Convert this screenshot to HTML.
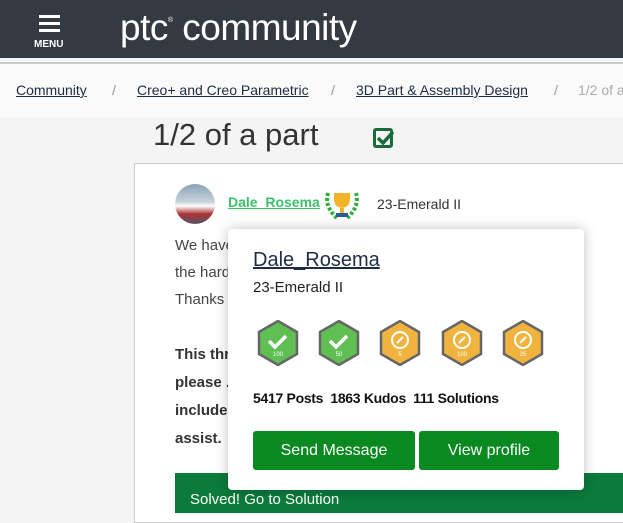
<!DOCTYPE html>
<html><head><style>
*{margin:0;padding:0;box-sizing:border-box}
body{width:623px;height:505px;overflow:hidden;background:#f4f4f4;font-family:"Liberation Sans",sans-serif;position:relative;color:#333}
.hdr{position:absolute;left:0;top:0;width:623px;height:58px;background:#343a41}
.hdr .ham{position:absolute;left:39px;top:15px;width:21px}
.hdr .ham i{display:block;height:3px;background:#fff;margin-bottom:4px}
.hdr .menu{position:absolute;left:34px;top:39px;color:#fff;font-size:10px;font-weight:bold}
.hdr .logo{position:absolute;left:120px;top:7px;color:#fff;font-size:37px;letter-spacing:-0.5px}
.hdr .logo sup{font-size:7px;vertical-align:top;position:relative;top:10px}
.line{position:absolute;left:0;top:62px;width:623px;height:2px;background:#ccc}
.bc{position:absolute;left:0;top:64px;width:623px;height:54px;background:#fafafa;font-size:14px;white-space:nowrap}
.bc span{position:absolute;top:18px}
.bc a{color:#1d2c44;text-decoration:underline}
.bc .s{color:#999}
.title{position:absolute;left:153px;top:117px;font-size:31px;color:#333}
.chk{position:absolute;left:373px;top:128px;width:20px;height:20px;border:3px solid #1b6b3a;border-radius:3px}
.card{position:absolute;left:134px;top:163px;width:500px;height:360px;background:#fff;border:1px solid #ccc}
.av{position:absolute;left:175px;top:184px;width:40px;height:40px;border-radius:50%;background:linear-gradient(#8aa3b8 0,#c9d3da 45%,#fff 55%,#a33 75%,#556 100%)}
.un{position:absolute;left:228px;top:194px;color:#3cc06a;font-weight:bold;font-size:14px;text-decoration:underline}
.rank{position:absolute;left:377px;top:196px;font-size:14px;color:#333}
.tro{position:absolute;left:322px;top:187px;width:40px;height:36px}
.p{position:absolute;left:175px;font-size:15px;color:#444;white-space:nowrap}
.b{font-weight:bold;color:#333}
.sol{position:absolute;left:175px;top:473px;width:460px;height:40px;background:#0b7a3b;color:#fff;font-size:15px;padding:18px 0 0 15px}
.pop{position:absolute;left:228px;top:229px;width:356px;height:261px;background:#fff;border-radius:4px;box-shadow:0 0 12px rgba(0,0,0,.25)}
.arr{position:absolute;left:264px;top:222px;width:14px;height:14px;background:#fff;transform:rotate(45deg)}
.pn{position:absolute;left:25px;top:20px;font-size:20px;color:#1d2c44;text-decoration:underline}
.pr{position:absolute;left:25px;top:50px;font-size:15px;color:#222}
.bd{position:absolute;top:91px}
.st{position:absolute;left:25px;top:161px;font-size:14px;font-weight:bold;color:#111;letter-spacing:-0.3px}
.btn{position:absolute;top:202px;height:39px;background:#088a20;color:#fff;font-size:16px;text-align:center;line-height:39px;border-radius:3px}
</style></head><body>
<div class="hdr"><div class="ham"><i></i><i></i><i></i></div><div class="menu">MENU</div><div class="logo">ptc<sup>®</sup> community</div></div>
<div class="line"></div>
<div class="bc"><span style="left:16px"><a>Community</a></span><span class="s" style="left:112px">/</span><span style="left:137px"><a>Creo+ and Creo Parametric</a></span><span class="s" style="left:331px">/</span><span style="left:356px"><a>3D Part &amp; Assembly Design</a></span><span class="s" style="left:554px">/</span><span class="s" style="left:578px;color:#aaa">1/2 of a part</span></div>
<div class="title">1/2 of a part</div>
<div class="chk"><svg width="18" height="14" style="position:absolute;left:0;top:0" viewBox="0 0 18 14"><path d="M2 7l5 5 10-11" stroke="#1b6b3a" stroke-width="3.5" fill="none"/></svg></div>
<div class="card"></div>
<div class="av"></div>
<div class="un">Dale_Rosema</div>
<svg class="tro" viewBox="0 0 40 36"><path d="M6 6q-4 14 10 26M34 6q4 14-10 26" stroke="#2bb03a" stroke-width="4" fill="none" stroke-dasharray="3 2"/><path d="M12 6h16v6q0 8-8 9-8-1-8-9z" fill="#f0b429"/><rect x="18" y="21" width="4" height="5" fill="#f0b429"/><rect x="14" y="26" width="12" height="4" fill="#2a5a9a"/></svg>
<div class="rank">23-Emerald II</div>
<div class="p" style="top:237px">We have some parts that we split in two co</div>
<div class="p" style="top:264px">the hard way. Is there a way to repeat re</div>
<div class="p" style="top:291px">Thanks</div>
<div class="p b" style="top:346px">This thread is inactive ... Community M</div>
<div class="p b" style="top:374px">please ... . You m</div>
<div class="p b" style="top:402px">include ... <span style="color:#1a6bd0">ing</span> so an</div>
<div class="p b" style="top:430px">assist.</div>
<div class="sol">Solved! Go to Solution</div>
<div class="arr"></div>
<div class="pop">
<div class="pn">Dale_Rosema</div>
<div class="pr">23-Emerald II</div>
<svg class="bd" style="left:29px" width="42" height="46" viewBox="0 0 42 46"><polygon points="21,1 40,12 40,34 21,45 2,34 2,12" fill="#5fbf52" stroke="#666" stroke-width="2.5"/><path d="M12 21l6 6 11-11" stroke="#fff" stroke-width="3.5" fill="none"/><text x="21" y="36" font-size="6" fill="#fff" text-anchor="middle" font-family="Liberation Sans">100</text></svg>
<svg class="bd" style="left:90px" width="42" height="46" viewBox="0 0 42 46"><polygon points="21,1 40,12 40,34 21,45 2,34 2,12" fill="#5fbf52" stroke="#666" stroke-width="2.5"/><path d="M12 21l6 6 11-11" stroke="#fff" stroke-width="3.5" fill="none"/><text x="21" y="36" font-size="6" fill="#fff" text-anchor="middle" font-family="Liberation Sans">50</text></svg>
<svg class="bd" style="left:151px" width="42" height="46" viewBox="0 0 42 46"><polygon points="21,1 40,12 40,34 21,45 2,34 2,12" fill="#f0b43e" stroke="#666" stroke-width="2.5"/><circle cx="21" cy="20" r="8" stroke="#fff" stroke-width="2" fill="none"/><path d="M18 23l6-6" stroke="#fff" stroke-width="2"/><text x="21" y="36" font-size="6" fill="#fff" text-anchor="middle" font-family="Liberation Sans">5</text></svg>
<svg class="bd" style="left:213px" width="42" height="46" viewBox="0 0 42 46"><polygon points="21,1 40,12 40,34 21,45 2,34 2,12" fill="#f0b43e" stroke="#666" stroke-width="2.5"/><circle cx="21" cy="20" r="8" stroke="#fff" stroke-width="2" fill="none"/><path d="M18 23l6-6" stroke="#fff" stroke-width="2"/><text x="21" y="36" font-size="6" fill="#fff" text-anchor="middle" font-family="Liberation Sans">100</text></svg>
<svg class="bd" style="left:274px" width="42" height="46" viewBox="0 0 42 46"><polygon points="21,1 40,12 40,34 21,45 2,34 2,12" fill="#f0b43e" stroke="#666" stroke-width="2.5"/><circle cx="21" cy="20" r="8" stroke="#fff" stroke-width="2" fill="none"/><path d="M18 23l6-6" stroke="#fff" stroke-width="2"/><text x="21" y="36" font-size="6" fill="#fff" text-anchor="middle" font-family="Liberation Sans">25</text></svg>
<div class="st">5417 Posts&nbsp; 1863 Kudos&nbsp; 111 Solutions</div>
<div class="btn" style="left:25px;width:162px">Send Message</div>
<div class="btn" style="left:191px;width:140px">View profile</div>
</div>
</body></html>
